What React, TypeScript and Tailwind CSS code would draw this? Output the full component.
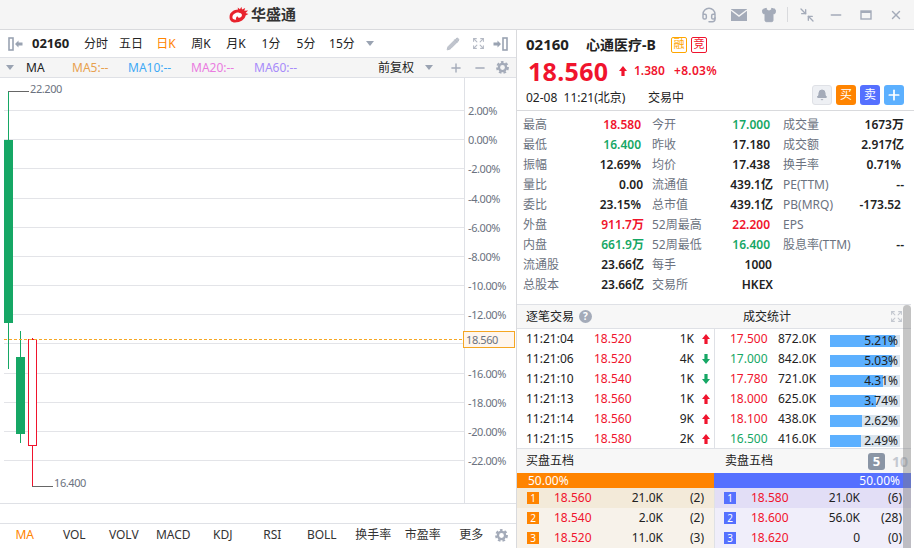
import { Headset, Minimize2, Minus, Plus, X, Shirt, Pencil, Bell, Expand } from 'lucide-react'

const font = 'font-["Noto_Sans","Noto_Sans_CJK_SC",sans-serif]'

const periods = [
  { label: '分时' },
  { label: '五日' },
  { label: '日K', active: true },
  { label: '周K' },
  { label: '月K' },
  { label: '1分' },
  { label: '5分' },
  { label: '15分' },
]

const red = 'text-[#f0142d]'
const green = 'text-[#16a765]'
const dark = 'text-[#222]'

// label, value, colour, right nudge
const statCols = [
  [
    ['最高', '18.580', red, 'pr-[3px]'],
    ['最低', '16.400', green, 'pr-[3px]'],
    ['振幅', '12.69%', dark, 'pr-[3px]'],
    ['量比', '0.00', dark, 'pr-[1px]'],
    ['委比', '23.15%', dark, 'pr-[3px]'],
    ['外盘', '911.7万', red, ''],
    ['内盘', '661.9万', green, ''],
    ['流通股', '23.66亿', dark, ''],
    ['总股本', '23.66亿', dark, ''],
  ],
  [
    ['今开', '17.000', green, 'pr-[3px]'],
    ['昨收', '17.180', dark, 'pr-[3px]'],
    ['均价', '17.438', dark, 'pr-[3px]'],
    ['流通值', '439.1亿', dark, ''],
    ['总市值', '439.1亿', dark, ''],
    ['52周最高', '22.200', red, 'pr-[3px]'],
    ['52周最低', '16.400', green, 'pr-[3px]'],
    ['每手', '1000', dark, 'pr-[1px]'],
    ['交易所', 'HKEX', dark, ''],
  ],
  [
    ['成交量', '1673万', dark, ''],
    ['成交额', '2.917亿', dark, ''],
    ['换手率', '0.71%', dark, 'pr-[3px]'],
    ['PE(TTM)', '--', dark, ''],
    ['PB(MRQ)', '-173.52', dark, 'pr-[3px]'],
    ['EPS', '', dark, ''],
    ['股息率(TTM)', '--', dark, ''],
  ],
]

const trades = [
  ['11:21:04', '18.520', '1K', true],
  ['11:21:06', '18.520', '4K', false],
  ['11:21:10', '18.540', '1K', false],
  ['11:21:13', '18.560', '1K', true],
  ['11:21:14', '18.560', '9K', true],
  ['11:21:15', '18.580', '2K', true],
] as const

const volumeStats = [
  ['17.500', '872.0K', '5.21%', 65, true],
  ['17.000', '842.0K', '5.03%', 62, false],
  ['17.780', '721.0K', '4.31%', 53, true],
  ['18.000', '625.0K', '3.74%', 46, true],
  ['18.100', '438.0K', '2.62%', 32, true],
  ['16.500', '416.0K', '2.49%', 31, false],
] as const

const bids = [
  ['1', '18.560', '21.0K', '(2)'],
  ['2', '18.540', '2.0K', '(2)'],
  ['3', '18.520', '11.0K', '(3)'],
]
const asks = [
  ['1', '18.580', '21.0K', '(6)'],
  ['2', '18.600', '56.0K', '(28)'],
  ['3', '18.620', '0', '(0)'],
]

const gridYs = [110, 139, 168, 198, 227, 256, 285, 314, 343, 373, 402, 431, 460]
const axisLabels = ['2.00%', '0.00%', '-2.00%', '-4.00%', '-6.00%', '-8.00%', '-10.00%', '-12.00%', '', '-16.00%', '-18.00%', '-20.00%', '-22.00%']

function Arrow({ up }: { up: boolean }) {
  return (
    <svg width="8" height="10" viewBox="0 0 8 10" className={up ? 'fill-[#f0142d]' : 'fill-[#16a765]'}>
      {up ? <path d="M4 0 8 5H5.6V10H2.4V5H0Z" /> : <path d="M4 10 0 5H2.4V0H5.6V5H8Z" />}
    </svg>
  )
}

function PanelArrow({ flip }: { flip?: boolean }) {
  return (
    <svg width="15" height="14" viewBox="0 0 15 14" className={flip ? '-scale-x-100' : ''}>
      <rect x="1" y="1" width="4" height="12" fill="none" stroke="#9aa3b2" strokeWidth="1.6" />
      <path d="M7 7 10.5 3.5V5.5H14.5V8.5H10.5V10.5Z" fill="#9aa3b2" />
    </svg>
  )
}

function Caret({ className = '' }: { className?: string }) {
  return <div className={`w-0 h-0 border-x-[4px] border-x-transparent border-t-[5px] border-t-[#9aa3b2] ${className}`} />
}

function Gear() {
  return (
    <svg width="13" height="13" viewBox="0 0 13 13" className="shrink-0">
      <circle cx="6.5" cy="6.5" r="3.6" fill="none" stroke="#a4abb9" strokeWidth="2.4" />
      <circle cx="6.5" cy="6.5" r="5.4" fill="none" stroke="#a4abb9" strokeWidth="2" strokeDasharray="2.6 2.05" />
    </svg>
  )
}

function Logo() {
  return (
    <svg width="22" height="16" viewBox="1 1 22 17">
      <path
        d="M2 11C2 6.5 7 3.6 11 3.6L10.6 1.6 13 3.4 14.6.8 15.2 3.6 18.6 2 17.6 5 21.6 4.6 19 7.4 22 8.4 19 10C18.4 14 13.6 17.4 7.6 17.4 4 17.4 1.6 15 2 11Z"
        fill="#e8232d"
      />
      <path d="M5 11.5C5.5 8.5 9 6.6 12 7 15 7.4 16 9.4 14.4 11.4 13 13 10.4 12.6 10.6 10.8 9 11.4 8.4 13 9 14.4 6.6 14.6 4.7 13.4 5 11.5Z" fill="#fff" />
    </svg>
  )
}

function Chart() {
  const labelStyle = { fontSize: 11, letterSpacing: -0.4, fill: '#6b7280' }
  return (
    <svg width="516" height="425" viewBox="0 78 516 425" className="block shrink-0">
      {gridYs.map(y => (
        <line key={y} x1="4" x2="464" y1={y + 0.5} y2={y + 0.5} stroke="#e3e4e8" />
      ))}
      <line x1="464.5" x2="464.5" y1="78" y2="503" stroke="#dfe1e6" />
      {axisLabels.map((t, i) => (
        <text key={i} x={468} y={gridYs[i] + 5} style={labelStyle}>
          {t}
        </text>
      ))}
      <line x1="8.5" x2="8.5" y1="91" y2="369" stroke="#16a765" />
      <rect x="4" y="140" width="9" height="183" fill="#16a765" />
      <line x1="20.5" x2="20.5" y1="331" y2="443" stroke="#16a765" />
      <rect x="16" y="357" width="9" height="77" fill="#16a765" />
      <line x1="32.5" x2="32.5" y1="338" y2="486" stroke="#f0142d" />
      <rect x="28.5" y="339.5" width="8" height="106" fill="#fff" stroke="#f0142d" />
      <line x1="8" x2="29" y1="91.5" y2="91.5" stroke="#666" />
      <text x="30" y="93" style={labelStyle}>22.200</text>
      <line x1="32" x2="53" y1="486.5" y2="486.5" stroke="#666" />
      <text x="54" y="487" style={labelStyle}>16.400</text>
      <line x1="4" x2="463" y1="339.5" y2="339.5" stroke="#f5a623" strokeDasharray="3 2" />
      <rect x="463.5" y="331.5" width="51" height="16" fill="#fff6ee" stroke="#f5a623" />
      <text x="466" y="344" style={labelStyle}>18.560</text>
    </svg>
  )
}

export default function App() {
  return (
    <div className={`w-[914px] h-[548px] overflow-hidden bg-white text-[12px] text-[#222] ${font}`}>
      <div className="h-[30px] bg-[#f5f5f5] border-b border-[#d9dadd] relative flex items-center pl-[228px]">
        <div className="flex items-center gap-[1px]">
          <Logo />
          <span className="text-[15px] font-bold text-[#333]">华盛通</span>
        </div>
        <div className="absolute right-[11px] top-0 h-[29px] flex items-center text-[#a4abb9]">
          <Headset size={16} strokeWidth={2.2} className="mr-[13px]" />
          <svg width="18" height="14" viewBox="0 0 18 14" className="mr-[13px]">
            <rect x="1" y="1" width="16" height="12" fill="#a4abb9" />
            <path d="M1 2 9 8 17 2" fill="none" stroke="#f5f5f5" strokeWidth="1.4" />
          </svg>
          <Shirt size={16} fill="#a4abb9" strokeWidth={1.5} className="mr-[10px]" />
          <div className="w-px h-[15px] bg-[#d9dadd] mr-[11px]" />
          <Minimize2 size={16} strokeWidth={2} className="rotate-90 mr-[13px]" />
          <Minus size={16} strokeWidth={2.4} className="mr-[15px]" />
          <svg width="14" height="14" viewBox="0 0 14 14" className="mr-[16px]">
            <rect x="2" y="3" width="10" height="8" fill="none" stroke="#a4abb9" strokeWidth="1.4" />
            <rect x="2" y="3" width="10" height="2" fill="#a4abb9" />
          </svg>
          <X size={14} strokeWidth={2.4} />
        </div>
      </div>

      <div className="flex h-[518px]">
        <div className="w-[517px] shrink-0 border-r border-[#d9dadd] flex flex-col">
          <div className="h-[27px] flex items-center pl-[8px] pr-[8px] shrink-0">
            <PanelArrow />
            <span className="font-bold text-[13px] ml-[9px] w-[52px]">02160</span>
            <div className="flex items-center">
              {periods.map(p => (
                <span key={p.label} className={`mr-[11px] min-w-[24px] text-center ${p.active ? 'text-[#ff8400]' : ''}`}>
                  {p.label}
                </span>
              ))}
            </div>
            <Caret />
            <div className="ml-auto flex items-center text-[#b4b9c4]">
              <Pencil size={14} fill="#c0c4cd" strokeWidth={1.5} className="mr-[12px]" />
              <Expand size={13} strokeWidth={2} className="mr-[8px]" />
              <PanelArrow flip />
            </div>
          </div>
          <div className="h-[19px] bg-[#f5f5f5] border-y border-[#dfe1e6] flex items-center pl-[6px] pr-[7px] shrink-0 box-content">
            <Caret />
            <span className="ml-[12px] w-[46px]">MA</span>
            <span className="text-[#e8a14f] w-[56px]">MA5:--</span>
            <span className="text-[#3fa9f5] w-[63px]">MA10:--</span>
            <span className="text-[#ea7be0] w-[63px]">MA20:--</span>
            <span className="text-[#a78bfa]">MA60:--</span>
            <span className="ml-auto mr-[11px]">前复权</span>
            <Caret className="mr-[16px]" />
            <Plus size={14} strokeWidth={2.4} className="text-[#a4abb9] mr-[10px]" />
            <Minus size={14} strokeWidth={2.4} className="text-[#a4abb9] mr-[9px]" />
            <Gear />
          </div>
          <Chart />
          <div className="h-[19px] border-y border-[#dfe1e6] shrink-0 box-content" />
          <div className="flex-1 flex items-center pr-[8px] pb-[2px] text-[#333]">
            <span className="w-[50px] text-center text-[#ff8400]">MA</span>
            <span className="w-[50px] text-center">VOL</span>
            <span className="w-[50px] text-center">VOLV</span>
            <span className="w-[50px] text-center">MACD</span>
            <span className="w-[50px] text-center">KDJ</span>
            <span className="w-[50px] text-center">RSI</span>
            <span className="w-[50px] text-center">BOLL</span>
            <span className="w-[50px] text-center ml-[2px]">换手率</span>
            <span className="w-[50px] text-center">市盈率</span>
            <span className="w-[48px] text-center">更多</span>
            <span className="ml-auto"><Gear /></span>
          </div>
        </div>

        <div className="flex-1 relative flex flex-col min-w-0">
          <div className="h-[81px] shrink-0 border-b border-[#d9dadd] pl-[9px] pr-[10px]">
            <div className="h-[29px] flex items-center">
              <span className="font-bold text-[15px] w-[60px]">02160</span>
              <span className="font-bold text-[14px] w-[85px]">心通医疗-B</span>
              <span className="w-[16px] h-[16px] rounded-[2px] border border-[#ffa600] text-[#ffa600] text-[11px] flex items-center justify-center mr-[4px]">融</span>
              <span className="w-[16px] h-[16px] rounded-[2px] border border-[#f0142d] text-[#f0142d] text-[11px] flex items-center justify-center">竞</span>
            </div>
            <div className="flex items-center h-[24px] text-[#f0142d] pl-[2px]">
              <span className="font-bold text-[25px] tracking-[0.3px] leading-none w-[91px]">18.560</span>
              <Arrow up />
              <span className="font-semibold ml-[7px] w-[40px]">1.380</span>
              <span className="font-semibold tracking-[0.3px]">+8.03%</span>
            </div>
            <div className="h-[27px] flex items-center">
              <span className="w-[122px] mt-[3px]">02-08&nbsp; 11:21(北京)</span>
              <span className="mt-[3px]">交易中</span>
              <div className="ml-auto flex items-center gap-[4px] -mt-[3px]">
                <span className="w-[20px] h-[20px] rounded-[3px] bg-[#eef0f4] border border-[#dfe1e6] flex items-center justify-center">
                  <Bell size={12} fill="#a4abb9" className="text-[#a4abb9]" />
                </span>
                <span className="w-[20px] h-[20px] rounded-[3px] bg-[#ff8400] text-white flex items-center justify-center">买</span>
                <span className="w-[20px] h-[20px] rounded-[3px] bg-[#5570ff] text-white flex items-center justify-center">卖</span>
                <span className="w-[20px] h-[20px] rounded-[3px] bg-[#5cb0ff] text-white flex items-center justify-center">
                  <Plus size={16} strokeWidth={2.6} />
                </span>
              </div>
            </div>
          </div>

          <div className="h-[193px] shrink-0 flex pl-[6px] pt-[4px]">
            {statCols.map((col, i) => (
              <div key={i} className={i === 0 ? 'w-[122px] pr-[1px]' : i === 1 ? 'w-[131px] pr-[3px]' : 'w-[128px]'}>
                {col.map(([label, value, color, nudge]) => (
                  <div key={label} className="h-[20px] flex items-center justify-between">
                    <span className={`text-[#6b7280] ${i > 0 ? 'pl-[7px]' : ''}`}>{label}</span>
                    <span className={`font-semibold ${color} ${nudge}`}>{value}</span>
                  </div>
                ))}
              </div>
            ))}
          </div>

          <div className="flex-1 flex flex-col mr-[3px] min-h-0">
            <div className="h-[23px] shrink-0 bg-[#f7f7f7] border-y border-[#dfe1e6] flex items-center pl-[9px] relative box-content">
              <span className="w-[53px]">逐笔交易</span>
              <span className="w-[13px] h-[13px] rounded-full bg-[#a4abb9] text-white text-[10px] font-bold flex items-center justify-center">?</span>
              <span className="ml-[151px]">成交统计</span>
              <Expand size={13} strokeWidth={2} className="absolute right-[8px] top-[5px] text-[#c4c8d0]" />
            </div>

            <div className="h-[120px] shrink-0 flex border-b border-[#dfe1e6]">
              <div className="w-[198px] shrink-0 border-r border-[#dfe1e6] pl-[9px]">
                {trades.map(([t, p, v, up]) => (
                  <div key={t} className="h-[20px] flex items-center">
                    <span className="w-[68px]">{t}</span>
                    <span className={`w-[62px] ${red}`}>{p}</span>
                    <span className="w-[38px] text-right">{v}</span>
                    <span className="ml-[8px]"><Arrow up={up} /></span>
                  </div>
                ))}
              </div>
              <div className="flex-1 pl-[15px]">
                {volumeStats.map(([p, v, pct, w, up]) => (
                  <div key={pct} className="h-[20px] flex items-center">
                    <span className={`w-[48px] ${up ? red : green}`}>{p}</span>
                    <span className="w-[52px]">{v}</span>
                    <div className="w-[70px] h-[12px] mt-[4px] bg-[#d9e4ee] relative">
                      <div className="h-full bg-[#5cb0ff]" style={{ width: w }} />
                      <span className="absolute right-[2px] top-0 leading-[12px]">{pct}</span>
                    </div>
                  </div>
                ))}
              </div>
            </div>

            <div className="h-[24px] shrink-0 bg-[#f7f7f7] flex items-center pl-[9px] relative">
              <span className="w-[199px]">买盘五档</span>
              <span>卖盘五档</span>
              <span className="absolute left-[351px] top-[4px] w-[17px] h-[17px] rounded-[3px] bg-[#8a95a5] text-white font-bold text-[13px] flex items-center justify-center">5</span>
              <span className="absolute left-[375px] top-[2px] text-[#c4c8d0] font-bold text-[14px]">10</span>
            </div>
            <div className="h-[15px] shrink-0 flex text-white">
              <div className="w-[197px] bg-[#ff8400] pl-[11px] leading-[15px]">50.00%</div>
              <div className="flex-1 bg-[#5570ff] text-right pr-[11px] leading-[15px]">50.00%</div>
            </div>
            <div className="flex-1 flex">
              <div className="w-[198px] shrink-0 border-r border-[#dfe1e6] bg-[#f7f2ea]">
                {bids.map(([n, p, v, c]) => (
                  <div key={n} className={`h-[20px] flex items-center pl-[10px] ${n === '1' ? 'bg-[#f3ead9]' : ''}`}>
                    <span className="w-[12px] h-[12px] bg-[#ff8400] text-white text-[10px] flex items-center justify-center">{n}</span>
                    <span className={`ml-[15px] w-[50px] ${red}`}>{p}</span>
                    <span className="w-[59px] text-right">{v}</span>
                    <span className="w-[41px] text-right">{c}</span>
                  </div>
                ))}
              </div>
              <div className="flex-1 bg-[#f0eefa]">
                {asks.map(([n, p, v, c]) => (
                  <div key={n} className={`h-[20px] flex items-center pl-[9px] ${n === '1' ? 'bg-[#e2def6]' : ''}`}>
                    <span className="w-[12px] h-[12px] bg-[#5570ff] text-white text-[10px] flex items-center justify-center">{n}</span>
                    <span className={`ml-[15px] w-[50px] ${red}`}>{p}</span>
                    <span className="w-[59px] text-right">{v}</span>
                    <span className="w-[42px] text-right">{c}</span>
                  </div>
                ))}
              </div>
            </div>
          </div>
          <div className="absolute right-[3px] top-[275px] bottom-0 w-[8px] rounded-t-[4px] bg-[#808080]/45" />
        </div>
      </div>
    </div>
  )
}
